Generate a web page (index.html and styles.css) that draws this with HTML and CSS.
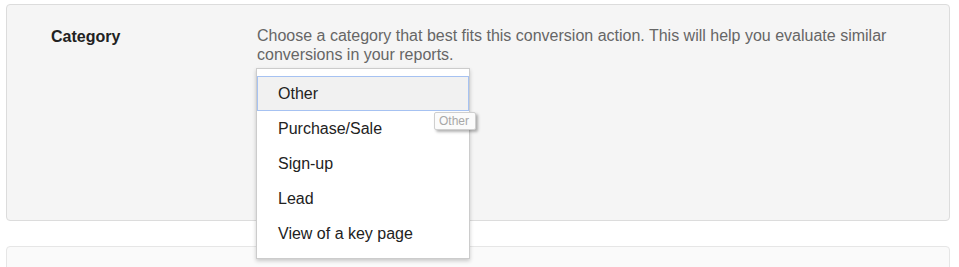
FILE: index.html
```html
<!DOCTYPE html>
<html lang="en">
<head>
<meta charset="utf-8">
<title>Category</title>
<link rel="stylesheet" href="styles.css">
</head>
<body>
<div class="page">
  <section class="card card-category">
    <div class="label">Category</div>
    <div class="field">
      <p class="desc">Choose a category that best fits this conversion action. This will help you evaluate similar conversions in your reports.</p>
      <div class="select-wrap">
        <ul class="menu">
          <li class="item item-active">Other</li>
          <li class="item">Purchase/Sale</li>
          <li class="item">Sign-up</li>
          <li class="item">Lead</li>
          <li class="item">View of a key page</li>
        </ul>
        <div class="tooltip">Other</div>
      </div>
    </div>
  </section>
  <section class="card card-next"></section>
</div>
</body>
</html>
```
FILE: styles.css
```css
html, body {
  margin: 0;
  padding: 0;
  background: #ffffff;
  font-family: "Liberation Sans", Arial, sans-serif;
  overflow: hidden;
}

.page {
  padding: 4px 9px 0 6px;
  display: flex;
  flex-direction: column;
  gap: 25px;
}

.card {
  box-sizing: border-box;
  border-radius: 4px;
}

.card-category {
  height: 217px;
  background: #f5f5f5;
  border: 1px solid #dcdcdc;
  display: flex;
  padding: 21px 0 0 44px;
}

.label {
  width: 205px;
  flex: none;
  font-size: 16px;
  font-weight: bold;
  color: #222222;
  padding-top: 2px;
}

.field {
  flex: 1;
}

.desc {
  margin: 1px 0 0;
  max-width: 660px;
  padding-left: 1px;
  font-size: 16px;
  color: #666666;
  line-height: 18.5px;
}

.select-wrap {
  position: relative;
  margin-top: 4px;
  width: 214px;
  height: 30px;
  box-sizing: border-box;
  border: 1px solid #cccccc;
  background: #ffffff;
}

.menu {
  position: absolute;
  top: -1px;
  left: -1px;
  box-sizing: border-box;
  width: 214px;
  margin: 0;
  padding: 7px 0;
  list-style: none;
  background: #ffffff;
  border: 1px solid #cccccc;
  box-shadow: 0 2px 4px rgba(0, 0, 0, 0.2);
}

.item {
  height: 35px;
  line-height: 35px;
  padding-left: 21px;
  font-size: 16px;
  color: #222222;
  box-sizing: border-box;
}

.item-active {
  background: #f1f1f1;
  border: 1px solid #a6c2f2;
  line-height: 33px;
  padding-left: 20px;
}

.tooltip {
  position: absolute;
  left: 177px;
  top: 43px;
  box-sizing: border-box;
  width: 42px;
  height: 18px;
  padding-left: 4px;
  font-size: 12px;
  line-height: 16px;
  color: #a8a8a8;
  background: #fbfbfb;
  border: 1px solid #cfcfcf;
  border-radius: 2px;
  box-shadow: 2px 2px 3px rgba(0, 0, 0, 0.3);
}

.card-next {
  height: 60px;
  background: #fafafa;
  border: 1px solid #e6e6e6;
}
```
